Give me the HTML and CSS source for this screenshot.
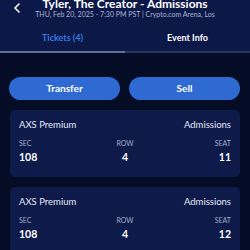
FILE: index.html
```html
<!DOCTYPE html>
<html>
<head>
<meta charset="utf-8">
<link rel="stylesheet" href="styles.css">
</head>
<body>
<div class="header">
  <div class="top">
    <svg class="back" width="8" height="10" viewBox="0 0 8 10"><path d="M6 1 L2 5 L6 9" fill="none" stroke="#ffffff" stroke-width="1.6" stroke-linecap="round" stroke-linejoin="round"/></svg>
    <div class="titles">
      <div class="title">Tyler, The Creator - Admissions</div>
      <div class="sub">THU, Feb 20, 2025 - 7:30 PM PST | Crypto.com Arena, Los</div>
    </div>
  </div>
  <div class="tabs">
    <div class="tab active">Tickets (4)</div>
    <div class="tab">Event Info</div>
  </div>
</div>
<div class="main">
  <div class="actions">
    <div class="btn">Transfer</div>
    <div class="btn">Sell</div>
  </div>
  <div class="card">
    <div class="row1"><span>AXS Premium</span><span>Admissions</span></div>
    <div class="seats">
      <div class="cell left"><div class="lbl">SEC</div><div class="val">108</div></div>
      <div class="cell mid"><div class="lbl">ROW</div><div class="val">4</div></div>
      <div class="cell right"><div class="lbl">SEAT</div><div class="val">11</div></div>
    </div>
  </div>
  <div class="card">
    <div class="row1"><span>AXS Premium</span><span>Admissions</span></div>
    <div class="seats">
      <div class="cell left"><div class="lbl">SEC</div><div class="val">108</div></div>
      <div class="cell mid"><div class="lbl">ROW</div><div class="val">4</div></div>
      <div class="cell right"><div class="lbl">SEAT</div><div class="val">12</div></div>
    </div>
  </div>
</div>
</body>
</html>
```
FILE: styles.css
```css
* { box-sizing: border-box; }
html, body { margin: 0; padding: 0; }
body {
  width: 250px;
  height: 250px;
  overflow: hidden;
  background: #050c26;
  font-family: Lato, "Noto Sans", sans-serif;
  color: #ffffff;
}
.header {
  background: #0c1848;
}
.top {
  position: relative;
  height: 26px;
  display: flex;
  justify-content: center;
}
.back {
  position: absolute;
  left: 13px;
  top: 3px;
}
.titles {
  text-align: center;
  margin-top: -2px;
}
.title {
  font-size: 12px;
  font-weight: 700;
  line-height: 12px;
}
.sub {
  font-size: 7px;
  line-height: 9px;
  margin-top: 0;
  color: #aab3cf;
}
.tabs {
  display: flex;
  height: 27px;
}
.tab {
  flex: 1;
  text-align: center;
  font-size: 9px;
  font-weight: 700;
  line-height: 24px;
  border-bottom: 2px solid #283461;
}
.tab.active {
  color: #3a78e0;
  border-bottom-color: #5f6e9f;
}
.main {
  padding: 24px 10px 0 9px;
}
.actions {
  display: flex;
  gap: 9px;
}
.btn {
  flex: 1;
  height: 23px;
  border-radius: 12px;
  background: #2f6ad3;
  text-align: center;
  font-size: 10px;
  font-weight: 700;
  line-height: 23px;
}
.card {
  margin-top: 10px;
  margin-left: 1px;
  background: #0d1a4a;
  border-radius: 5px;
  padding: 9px 9px 8px 9px;
  height: 67px;
}
.row1 {
  display: flex;
  justify-content: space-between;
  font-size: 9.5px;
  line-height: 12px;
  color: #e4e8f4;
}
.seats {
  display: flex;
  margin-top: 8px;
}
.cell { flex: 1; }
.cell.mid { text-align: center; }
.cell.right { text-align: right; }
.lbl {
  font-size: 7px;
  line-height: 9px;
  color: #a3adcc;
}
.val {
  font-size: 10.5px;
  font-weight: 700;
  line-height: 13px;
  margin-top: 3px;
}
```
